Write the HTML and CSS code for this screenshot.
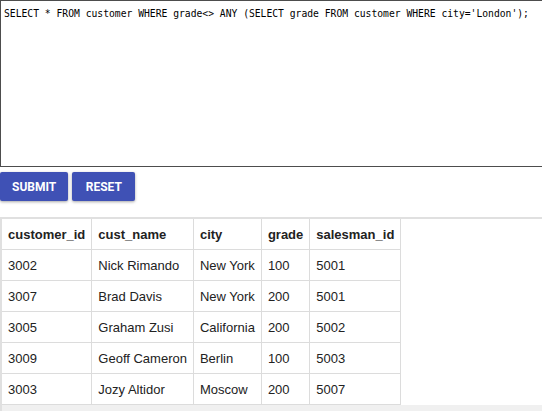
FILE: index.html
```html
<!DOCTYPE html>
<html>
<head>
<meta charset="utf-8">
<link rel="stylesheet" href="styles.css">
</head>
<body>
<textarea class="editor" spellcheck="false">SELECT * FROM customer WHERE grade&lt;&gt; ANY (SELECT grade FROM customer WHERE city='London');</textarea>
<div class="actions">
  <button class="btn">SUBMIT</button>
  <button class="btn">RESET</button>
</div>
<div class="results">
  <table class="grid">
    <tr><th>customer_id</th><th>cust_name</th><th>city</th><th>grade</th><th>salesman_id</th></tr>
    <tr><td>3002</td><td>Nick Rimando</td><td>New York</td><td>100</td><td>5001</td></tr>
    <tr><td>3007</td><td>Brad Davis</td><td>New York</td><td>200</td><td>5001</td></tr>
    <tr><td>3005</td><td>Graham Zusi</td><td>California</td><td>200</td><td>5002</td></tr>
    <tr><td>3009</td><td>Geoff Cameron</td><td>Berlin</td><td>100</td><td>5003</td></tr>
    <tr><td>3003</td><td>Jozy Altidor</td><td>Moscow</td><td>200</td><td>5007</td></tr>
  </table>
  <div class="track"></div>
</div>
</body>
</html>
```
FILE: styles.css
```css
html, body {
  margin: 0;
  padding: 0;
  background: #fff;
  overflow: hidden;
}
.editor {
  display: block;
  box-sizing: border-box;
  width: 560px;
  height: 167px;
  margin: 0;
  padding: 6px 3px;
  border: 1px solid #4d4d4d;
  font-family: "DejaVu Sans Mono", monospace;
  font-size: 9.7px;
  line-height: 14px;
  color: #000;
  resize: none;
  outline: none;
}
.actions {
  display: flex;
  gap: 4px;
  margin-top: 5px;
}
.btn {
  height: 29px;
  padding: 0 12px;
  border: none;
  border-radius: 2px;
  background: #3f51b5;
  color: #fff;
  font-family: Roboto, "Liberation Sans", sans-serif;
  font-weight: 700;
  font-size: 12px;
  box-shadow: 0 1px 3px rgba(0,0,0,0.35);
}
.btn + .btn {
  padding: 0 13.5px;
}
.results {
  margin-top: 16px;
  border-top: 2px solid #e0e0e0;
  border-left: 2px solid #e0e0e0;
}
.grid {
  border-collapse: collapse;
  font-family: "Liberation Sans", Arial, sans-serif;
  font-size: 13px;
  color: #222;
}
.grid th, .grid td {
  border: 1px solid #dcdcdc;
  padding: 9px 6px 7px;
  line-height: 14px;
  text-align: left;
}
.grid tr:first-child th { border-top: none; }
.grid tr > :first-child { border-left: none; }
.grid th { font-weight: 700; }
.track {
  height: 10px;
  background: #f0f0f0;
}
```
